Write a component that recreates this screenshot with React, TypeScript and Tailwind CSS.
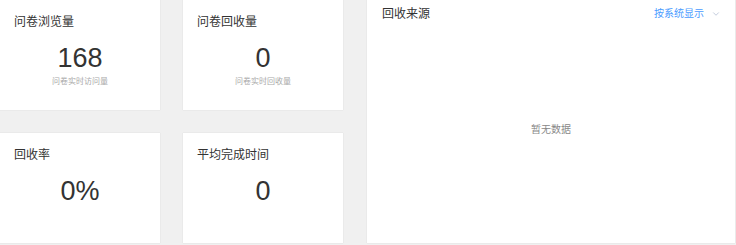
import { ChevronDown } from "lucide-react"

const stats = [
  { title: "问卷浏览量", value: "168", sub: "问卷实时访问量" },
  { title: "问卷回收量", value: "0", sub: "问卷实时回收量" },
  { title: "回收率", value: "0%", sub: "" },
  { title: "平均完成时间", value: "0", sub: "" },
]

export default function App() {
  return (
    <div
      className="flex h-[245px] w-[736px] gap-[24px] bg-[#f0f0f0] pr-[1px] pb-[2px] text-[#333]"
      style={{ fontFamily: '"Liberation Sans", "Noto Sans CJK SC", sans-serif' }}
    >
      {/* Stat cards */}
      <div className="grid grid-cols-[160px_160px] grid-rows-[110px_110px] gap-[23px]">
        {stats.map((s) => (
          <div key={s.title} className="flex flex-col bg-white px-[14px] pt-[14px] shadow-[0_0_1px_rgba(0,0,0,0.15)]">
            <div className="text-[12px] leading-[16px]">{s.title}</div>
            <div className="mt-[13px] text-center text-[27px] leading-[30px] text-[#333]">{s.value}</div>
            {s.sub && <div className="mt-[4px] text-center text-[8px] leading-[10px] text-[#aaa]">{s.sub}</div>}
          </div>
        ))}
      </div>

      {/* Source panel */}
      <div className="flex flex-1 flex-col bg-white shadow-[0_0_1px_rgba(0,0,0,0.15)]">
        <div className="flex items-center justify-between pl-[15px] pr-[14px] pt-[6px]">
          <span className="text-[12px] leading-[16px]">回收来源</span>
          <span className="flex items-center gap-[7px] text-[10px] leading-[14px] text-[#4a9bff]">
            按系统显示
            <ChevronDown className="h-[10px] w-[10px] text-[#b8c2d6]" strokeWidth={2} />
          </span>
        </div>
        <div className="flex flex-1 items-center justify-center pb-[6px] text-[10px] text-[#888]">暂无数据</div>
      </div>
    </div>
  )
}
